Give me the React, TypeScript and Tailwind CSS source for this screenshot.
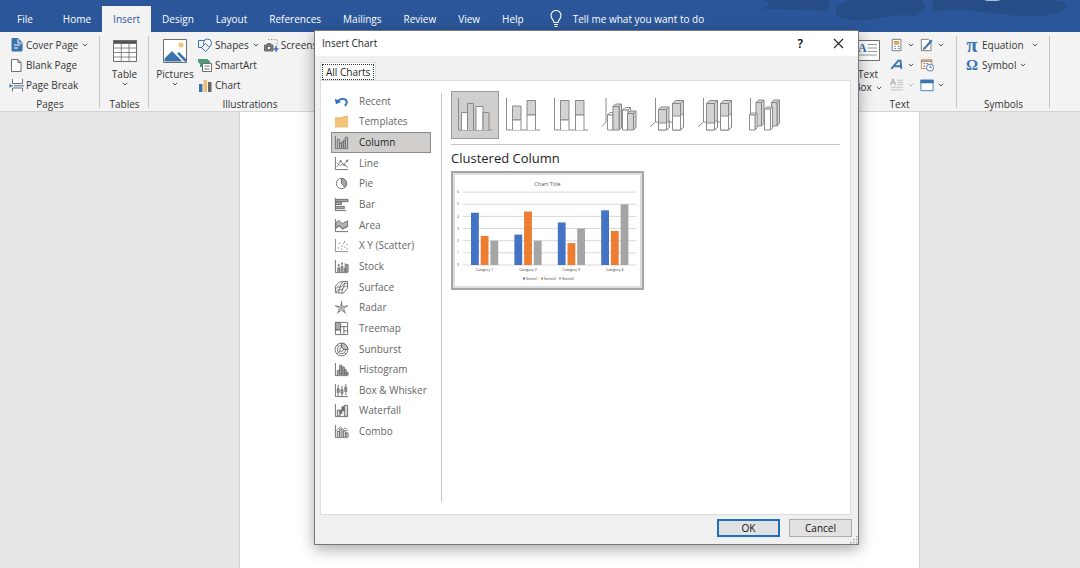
import type { ReactNode } from 'react';

const ribbonTabs = ['File', 'Home', 'Insert', 'Design', 'Layout', 'References', 'Mailings', 'Review', 'View', 'Help'];

const INK = '#6e6e6e';
const BLUE = '#3b73af';

function Icon({ children, className = 'w-4 h-4', box = '0 0 16 16' }: { children: ReactNode; className?: string; box?: string }) {
  return (
    <svg viewBox={box} className={`shrink-0 ${className}`} fill="none" stroke={INK} strokeWidth="1" aria-hidden="true">
      {children}
    </svg>
  );
}

function Chevron({ faded = false }: { faded?: boolean }) {
  return (
    <svg viewBox="0 0 6 6" className="h-[6px] w-[6px] shrink-0" fill="none" stroke={faded ? '#b5b5b5' : '#555'} strokeWidth="1" aria-hidden="true">
      <path d="M0.8 1.8 3 4l2.2-2.2" />
    </svg>
  );
}

const axes = <path d="M1.5 1v13.5H15" />;

const chartTypes: { name: string; art: ReactNode }[] = [
  {
    name: 'Recent',
    art: (
      <g stroke="#2f6db5" strokeWidth="2">
        <path d="M3.5 8.5C6 4.5 12.5 4 13.5 8c.4 2-.6 3.5-2 4.5" />
        <path d="M1 5l1 6 5.5-2.5z" fill="#2f6db5" stroke="none" />
      </g>
    ),
  },
  {
    name: 'Templates',
    art: (
      <g stroke="none">
        <path d="M1 3.5h8l1.500-1.500H15v12H1z" fill="#e9b866" />
        <path d="M1 4.5h9l1-1h4v10.500H1z" fill="#f0c27a" />
      </g>
    ),
  },
  {
    name: 'Column',
    art: (
      <>
        {axes}
        <path d="M3.5 14V4.5H6V14M8 14V7.500h2V14M12 14V2.500h2.500V14" fill="#bdbdbd" />
        <path d="M6 14V9h2v5M10 14V5.500h2V14" />
      </>
    ),
  },
  {
    name: 'Line',
    art: (
      <>
        {axes}
        <path d="M3 12l4-6.500 3.500 4L15 4M3 7l3.500 3.500 3-2L15 12" strokeWidth="0.8" />
        <path d="M6 4.500h2v2H6zM10 8.500h2v2h-2zM13 4h2v2h-2z" fill={INK} stroke="none" />
      </>
    ),
  },
  {
    name: 'Pie',
    art: (
      <>
        <circle cx="8" cy="8" r="5.5" />
        <path d="M8 2.500a5.500 5.500 0 0 1 3.500 9.700L8 8z" fill="#a8a8a8" />
      </>
    ),
  },
  {
    name: 'Bar',
    art: (
      <>
        <path d="M1.500 1v14" />
        <path d="M1.500 2.500H15v2.500H1.500zM1.500 5H8v3H1.500zM1.500 10H11v2.500H1.500z" fill="#a8a8a8" />
        <path d="M1.500 14.500H13" />
      </>
    ),
  },
  {
    name: 'Area',
    art: (
      <>
        <path d="M2 5l3-2.500L9 6l5.500-3v6L9 11 5.500 7.500 2 11z" fill="#b5b5b5" />
        <path d="M1.500 1v13.500H15M2 11l3.500-2.500L9 12l5.500-3" />
      </>
    ),
  },
  {
    name: 'X Y (Scatter)',
    art: (
      <>
        <path d="M1.500 1v13.500H15" strokeWidth="0.8" />
        <path d="M4 10h1.200v1.200H4zM5.500 5h1.200v1.200H5.500zM8 8h1.200v1.200H8zM7.500 11.500h1.200v1H7.500zM10.500 3.500h1.200v1.200h-1.200zM11 9h1.200v1.200H11zM13 6h1.200v1.200H13zM13.500 11h1v1h-1zM9.500 5.500h1v1h-1z" fill={INK} stroke="none" />
      </>
    ),
  },
  {
    name: 'Stock',
    art: (
      <>
        {axes}
        <path d="M4 14V9.500h2V14M7.500 14V8h2v6M11 14V9.500h1.500V14M13 14V6h2v8" fill="#b5b5b5" />
        <path d="M5 5v3.500M8.500 3.500V7M12 4.500v4M4 6.500h2M7.500 5h2" />
      </>
    ),
  },
  {
    name: 'Surface',
    art: (
      <>
        <path d="M1.500 6.500L6 2l8.500-.5v7L10 14l-8.500-.5z" />
        <path d="M1.500 10C4 5 7 9.500 9 6s4-2 5.500-2M2 13c2.500-5 5-1 7.500-4s3.500-2 5-2.500M5 13.500c0-4 2-8 4-11.500M8.500 13.500c0-3 2-7 3.500-11" />
      </>
    ),
  },
  {
    name: 'Radar',
    art: (
      <>
        <path d="M8 1v7.500M1 6l7 2.500L15 6M3.500 14.500l4.500-6 4.500 6" />
        <path d="M8 3.500l1.500 3.500 4-.5-3 3 1 3.500L8 11l-3.500 2 1-3.500-3-3 4 .5z" fill="#c4c4c4" fillOpacity="0.6" strokeWidth="0.7" />
      </>
    ),
  },
  {
    name: 'Treemap',
    art: (
      <>
        <path d="M1.500 1.500h13v13h-13z" />
        <path d="M1.500 1.500H7v8H1.500z" fill="#a8a8a8" />
        <path d="M7 6h7.500M10.500 6v8.500M7 9.500v5M1.500 9.500H7M10.500 10.500h4" />
      </>
    ),
  },
  {
    name: 'Sunburst',
    art: (
      <>
        <circle cx="8" cy="8" r="6.8" />
        <circle cx="8" cy="8" r="4.3" />
        <path d="M8 1.200A6.800 6.800 0 0 1 14.800 8H10L8 6z" fill="#bdbdbd" />
        <circle cx="8" cy="8" r="2" fill="#fff" />
        <path d="M8 1.200V6M10 8h4.800M6.500 9.500L3.200 12.800M3.200 3.200l1.800 1.800M11 11l1.800 1.800" />
      </>
    ),
  },
  {
    name: 'Histogram',
    art: (
      <>
        {axes}
        <path d="M3.500 14V9H6v5M6 14V3.500h2.500V14M8.500 14V5.500H11V14M11 14V8h2v6M13 14v-3h2v3" fill="#a8a8a8" />
      </>
    ),
  },
  {
    name: 'Box & Whisker',
    art: (
      <>
        {axes}
        <path d="M4.500 3v10M8.500 4v9M12.500 2v10M3.500 3h2M7.500 4h2M11.500 2h2M3.500 13h2M7.500 13h2M11.500 12h2" strokeWidth="0.8" />
        <path d="M3.500 6h2v4h-2zM7.500 7h2v4h-2zM11.500 4.500h2V9h-2z" fill="#a8a8a8" />
      </>
    ),
  },
  {
    name: 'Waterfall',
    art: (
      <>
        {axes}
        <path d="M3.500 7.500h3V14h-3zM11 2.500h3.500V14H11z" fill="#d5d5d5" />
        <path d="M6.500 7.500h2V11h-2zM8.500 4H11v4H8.500z" fill={INK} />
      </>
    ),
  },
  {
    name: 'Combo',
    art: (
      <>
        {axes}
        <path d="M3.500 14V8H6v6M6 14V5.500h2.500V14M10 14V7h2.500v7M12.500 14V9.500H15V14" fill="#d5d5d5" />
        <path d="M2 8l4.500-5L10 6l2-2 3 3.500" strokeWidth="0.8" />
      </>
    ),
  },
];

type BlockProps = { x: number; y: number; w: number; bottom?: number; d?: number; fill?: string; split?: number };

// column with a top and a right face; split puts a white part at the foot
function Block({ x, y, w, bottom = 39, d = 2.5, fill = '#d3d3d3', split }: BlockProps) {
  const r = x + w;
  return (
    <>
      <path d={`M${x} ${y}l${d} ${-d}h${w}v${bottom - y}L${r} ${bottom}V${y}z`} fill={fill} />
      <path d={`M${x} ${y}H${r}V${bottom}H${x}z`} fill={fill} />
      {split && <path d={`M${x} ${split}H${r}l${d} ${-d}V${bottom - d}L${r} ${bottom}H${x}zM${r} ${split}V${bottom}`} fill="#fff" />}
      <path d={`M${r} ${y}l${d} ${-d}`} />
    </>
  );
}

const flatAxes = <path d="M7.5 7v32H41" />;
const deepAxes = <path d="M12.5 7v24L7 36M12.5 31H41l-3 4" />;

const subtypes: { name: string; art: ReactNode }[] = [
  {
    name: 'Clustered Column',
    art: (
      <>
        {flatAxes}
        <path d="M10.500 39V21.500h6V39M25 39V15.500h7V39" fill="#fff" />
        <path d="M16.500 39V12.500h6V39M32 39V21.500h6V39" fill="#cbcbcb" />
      </>
    ),
  },
  {
    name: 'Stacked Column',
    art: (
      <>
        {flatAxes}
        <path d="M13.500 29V15h8.500v14zM28 24V9.500h8.500V24z" fill="#d3d3d3" />
        <path d="M13.500 39V29H22v10M28 39V24h8.500v15" fill="#fff" />
      </>
    ),
  },
  {
    name: '100% Stacked Column',
    art: (
      <>
        {flatAxes}
        <path d="M13.500 29V9.500H22V29zM28.500 24V9.500H37V24z" fill="#d3d3d3" />
        <path d="M13.500 39V29H22v10M28.500 39V24H37v15" fill="#fff" />
      </>
    ),
  },
  {
    name: '3-D Clustered Column',
    art: (
      <>
        <path d="M11 7v24L7 35.500" />
        <Block x={12.5} y={24} w={5.5} fill="#fff" />
        <Block x={18} y={15.5} w={6} />
        <Block x={27.5} y={19} w={5.5} fill="#fff" />
        <Block x={32.5} y={22.5} w={6} />
      </>
    ),
  },
  {
    name: '3-D Stacked Column',
    art: (
      <>
        {deepAxes}
        <Block x={15.5} y={18.5} w={8} split={32} />
        <Block x={29.5} y={12.5} w={8} d={3} split={25} />
      </>
    ),
  },
  {
    name: '3-D 100% Stacked Column',
    art: (
      <>
        {deepAxes}
        <Block x={15.5} y={12.5} w={8} d={3} split={32} />
        <Block x={29.5} y={12.5} w={8} d={3} split={25} />
      </>
    ),
  },
  {
    name: '3-D Column',
    art: (
      <>
        <path d="M11.500 7v24" />
        <Block x={17} y={11.5} w={5.5} bottom={35} />
        <Block x={10.5} y={24} w={5.5} d={2} fill="#fff" />
        <Block x={32.5} y={11.5} w={5.5} bottom={35} />
        <Block x={25.5} y={18} w={6} d={2} fill="#fff" />
      </>
    ),
  },
];

const seriesColors = ['#4472c4', '#ed7d31', '#a5a5a5'];
const categories = [
  [4.3, 2.4, 2],
  [2.5, 4.4, 2],
  [3.5, 1.8, 3],
  [4.5, 2.8, 5],
];

function ChartPreview() {
  return (
    <svg viewBox="0 0 185 111" className="block w-full bg-white" fontFamily="'Open Sans', sans-serif" fill="#555">
      <text x="92.5" y="10.5" fontSize="5.5" textAnchor="middle">Chart Title</text>
      {[0, 1, 2, 3, 4, 5, 6].map((n) => (
        <g key={n}>
          <path d={`M8 ${90 - n * 12.15}H181`} stroke="#d4d4d4" strokeWidth="0.9" />
          <text x="2" y={91.2 - n * 12.15} fontSize="3.5">{n}</text>
        </g>
      ))}
      {categories.map((values, c) => (
        <g key={c}>
          {values.map((v, s) => (
            <rect key={s} x={16 + c * 43.4 + s * 9.7} y={90 - v * 12.15} width="7.8" height={v * 12.15} fill={seriesColors[s]} />
          ))}
          <text x={29.5 + c * 43.4} y="96" fontSize="3.5" textAnchor="middle" fill="#333">Category {c + 1}</text>
        </g>
      ))}
      {seriesColors.map((color, s) => (
        <g key={color}>
          <rect x={68 + s * 18} y="102.5" width="2" height="2" fill={color} />
          <text x={71 + s * 18} y="104.7" fontSize="3.5" fill="#333">Series{s + 1}</text>
        </g>
      ))}
    </svg>
  );
}

function Group({ label, className = '', children }: { label: string; className?: string; children: ReactNode }) {
  return (
    <section className={`relative flex shrink-0 flex-col pt-[3px] ${className}`}>
      <div className="flex h-[61px] shrink-0">{children}</div>
      <h2 className="shrink-0 text-center leading-4">{label}</h2>
      <div className="absolute right-0 top-1 h-[72px] w-px bg-[#c4c4c4]" />
    </section>
  );
}

function SmallButton({ icon, label, arrow = false }: { icon: ReactNode; label: string; arrow?: boolean }) {
  return (
    <button className="flex h-5 items-center whitespace-nowrap">
      {icon}
      <span className="ml-0.5">{label}</span>
      {arrow && <span className="ml-1"><Chevron /></span>}
    </button>
  );
}

function IconButton({ label, faded = false, arrow = true, children }: { label: string; faded?: boolean; arrow?: boolean; children: ReactNode }) {
  return (
    <button aria-label={label} className="flex h-5 items-center gap-1">
      <Icon className="h-[14px] w-[14px]">{children}</Icon>
      {arrow && <Chevron faded={faded} />}
    </button>
  );
}

function Ribbon() {
  return (
    <div className="flex h-[80px] border-b border-[#d5d5d5] bg-[#f3f3f3] text-[#333]">
      <Group label="Pages" className="w-[100px]">
        <div className="flex flex-col pl-2">
          <SmallButton
            label="Cover Page"
            arrow
            icon={
              <Icon>
                <path d="M4 1.500h6l4 4V14H4z" fill={BLUE} stroke={BLUE} />
                <path d="M10 2v4h4M6 8h6M6 11h4" stroke="#fff" />
              </Icon>
            }
          />
          <SmallButton
            label="Blank Page"
            icon={<Icon><path d="M3.500 2.500h6.500l3 3v9h-9.500zM10 2.500v3h3" fill="#fff" /></Icon>}
          />
          <SmallButton
            label="Page Break"
            icon={
              <Icon>
                <path d="M4.500 2v4.500h10V2M4.500 14.500V11h10v3.500" fill="#fff" />
                <path d="M6 8.800h10M2 8.800h3" stroke={BLUE} />
                <path d="M1.500 6.500v4.500L4 8.800z" fill={BLUE} stroke="none" />
              </Icon>
            }
          />
        </div>
      </Group>

      <Group label="Tables" className="w-[49px]">
        <button className="flex w-full flex-col items-center pt-1">
          <Icon className="h-6 w-[26px]" box="0 0 26 24">
            <path d="M1.500 1.500h23v21h-23z" fill="#fff" />
            <path d="M1.500 1.500h23v3h-23z" fill="#555" />
            <path d="M1.500 9h23M1.500 13.500h23M1.500 18h23M9.300 5v17.500M17 5v17.500" strokeWidth="0.8" />
          </Icon>
          <span className="mt-1 leading-[14px]">Table</span>
          <Chevron />
        </button>
      </Group>

      <Group label="Illustrations" className="w-[202px]">
        <button className="ml-1 flex w-11 flex-col items-center pt-1">
          <Icon className="h-6 w-[26px]" box="0 0 26 24">
            <path d="M1.500.5h23v23h-23z" fill="#fff" />
            <circle cx="19" cy="6" r="2.5" fill="#efc375" stroke="none" />
            <path d="M2.500 22.500v-3l7.500-7.500 10.500 10.500zM15 14.500l2-1.500 7 7v2.500h-1.500z" fill={BLUE} stroke="none" />
          </Icon>
          <span className="mt-1 leading-[14px]">Pictures</span>
          <Chevron />
        </button>
        <div className="flex flex-col">
          <SmallButton
            label="Shapes"
            arrow
            icon={
              <Icon>
                <g stroke={BLUE}>
                  <path d="M1.500 3.500h7v7h-7z" fill="#fff" />
                  <circle cx="10.5" cy="6" r="4" fill="#fff" />
                  <path d="M8.500 6.500l4 4-4 4-4-4z" fill="#f3f3f3" />
                </g>
              </Icon>
            }
          />
          <SmallButton
            label="SmartArt"
            icon={
              <Icon>
                <path d="M1 2h9.500l3 3-2 2H5v3H3V7L1 5z" fill="#4c9c7c" stroke="none" />
                <path d="M5.500 6.500h9v8h-9z" fill="#fff" />
                <path d="M7.500 9h5M7.500 12h5" />
              </Icon>
            }
          />
          <SmallButton
            label="Chart"
            icon={
              <Icon>
                <g stroke="none">
                  <path d="M2 7h3.500v8H2z" fill={BLUE} />
                  <path d="M6.500 3H10v12H6.500z" fill="#eebb70" />
                  <path d="M11 5h3.500v10H11z" fill="#666" />
                </g>
              </Icon>
            }
          />
        </div>
        <div className="ml-1">
          <SmallButton
            label="Screenshot"
            arrow
            icon={
              <Icon>
                <path d="M5 2.500h9V9" strokeDasharray="1.5 1.5" stroke="#999" />
                <path d="M1.500 8h2L4.500 6.500h3L8.500 8h1.500v6h-8.500z" fill="#777" />
                <circle cx="6" cy="11" r="1.7" fill="#fff" />
                <path d="M13 9v6M10.500 12h5" stroke={BLUE} strokeWidth="1.5" />
              </Icon>
            }
          />
        </div>
      </Group>

      <div className="grow" />

      <Group label="Text" className="w-[115px]">
        <button className="ml-1 flex w-11 flex-col items-center pt-1">
          <Icon className="h-6 w-[26px]" box="0 0 26 24">
            <path d="M1.500 1.500h23v20h-23z" fill="#fff" />
            <text x="3" y="13" fontSize="12" fontFamily="'Liberation Serif', serif" fontWeight="700" fill={BLUE} stroke="none">A</text>
            <path d="M13 5.500h9M13 9h9M13 12.500h9M4 16h18" stroke="#999" />
          </Icon>
          <span className="mt-1 leading-[14px]">Text</span>
          <span className="flex items-center gap-1 leading-[13px]">Box <Chevron /></span>
        </button>
        <div className="flex flex-col">
          <IconButton label="Quick Parts">
            <path d="M2.500 1.500h10v13h-10z" fill="#fff" />
            <path d="M5 4h5v3H5z" fill="#e9b866" stroke="#c28d35" />
            <path d="M5 9.500h2M9 9.500h2M5 12h2M9 12h2" stroke={BLUE} />
          </IconButton>
          <IconButton label="WordArt">
            <path d="M1.500 12.500L9.500 3h2.500l1 9.500M5.500 9.500h7" stroke={BLUE} strokeWidth="2.2" />
          </IconButton>
          <IconButton label="Drop Cap" faded>
            <path d="M.5 8L3.500 1l3 7M1.500 5.500h4" stroke="#999" />
            <path d="M8 2.500h7M8 5h7M8 7.500h7M1 10.500h14M1 13.500h14" stroke="#bbb" />
          </IconButton>
        </div>
        <div className="ml-[6px] flex flex-col">
          <IconButton label="Signature Line">
            <path d="M1.500 1.500h8l3 3v10h-11z" fill="#fff" />
            <path d="M13.500 2.500L6 11" stroke={BLUE} strokeWidth="2.5" />
            <path d="M3.500 13l1-2.500L6.500 12z" fill={BLUE} />
          </IconButton>
          <IconButton label="Date and Time" arrow={false}>
            <path d="M1.500 2h12v10h-12z" fill="#fff" stroke="#c97f4a" />
            <path d="M1.500 3.500h12M4 6.500h2M7.500 6.500h2M4 9.500h2" stroke="#8a7464" strokeWidth="1.5" />
            <circle cx="11.5" cy="11" r="4" fill="#fff" stroke={BLUE} />
            <path d="M11.500 8.500V11h2" stroke={BLUE} />
          </IconButton>
          <IconButton label="Object">
            <path d="M1 2.500h14v12H1z" fill="#fff" stroke={BLUE} />
            <path d="M.5 2h15v4H.5z" fill={BLUE} stroke="none" />
          </IconButton>
        </div>
      </Group>

      <Group label="Symbols" className="mr-[30px] w-[93px]">
        <div className="flex flex-col pl-[9px]">
          <button className="flex h-5 items-center gap-1">
            <span className="w-3 font-['Liberation_Serif',serif] text-[20px] font-bold leading-5 text-[#3b73af]" aria-hidden="true">π</span>
            Equation
            <span className="ml-1"><Chevron /></span>
          </button>
          <button className="flex h-5 items-center gap-1">
            <span className="w-3 font-['Liberation_Serif',serif] text-[15px] font-bold leading-5 text-[#3b73af]" aria-hidden="true">Ω</span>
            Symbol
            <Chevron />
          </button>
        </div>
      </Group>
    </div>
  );
}

function Header() {
  return (
    <header className="relative flex h-8 items-end bg-[#2b579a] text-white">
      {/* title bar ornament */}
      <svg viewBox="0 0 330 32" className="absolute right-0 top-0 h-8 w-[330px]" fill="#264d88" aria-hidden="true">
        <path d="M12 0h66c4 3 2 7-2 10-10 2-30-1-38 0C32 8 20 11 12 8l8-4z" />
        <path d="M86 8c4-4 10-6 14-8h72c6 5 4 10-6 16-14-2-24 0-36 2-18 3-38 4-44-3z" />
        <path d="M184 0h120c8 2 14 3 13 6-6 8-26 12-44 10-30-1-56-10-92-4z" />
        <path d="M234 0h17l-4 1h-10z" fill="#aebfdb" />
      </svg>
      <nav className="relative flex h-[26px] pl-[6px]">
        {ribbonTabs.map((tab) => (
          <button
            key={tab}
            className={`px-[11px] first:mr-2 ${tab === 'Insert' ? 'bg-[#f3f3f3] text-[#2b579a]' : ''}`}
          >
            {tab}
          </button>
        ))}
      </nav>
      <button className="relative ml-[14px] flex h-[26px] items-center gap-[10px]">
        <svg viewBox="0 0 14 18" className="h-[18px] w-[14px]" fill="none" stroke="#fff" strokeWidth="1.1" aria-hidden="true">
          <path d="M5 12.500c0-2.500-3-3.500-3-7a5 5 0 0 1 10 0c0 3.500-3 4.500-3 7zM5 14.500h4M5.500 16.500h3" />
        </svg>
        Tell me what you want to do
      </button>
    </header>
  );
}

function InsertChartDialog() {
  return (
    <div role="dialog" aria-label="Insert Chart" className="flex w-[545px] flex-col border border-[#777] bg-[#f0f0f0] text-[#222] shadow-[0_4px_14px_rgba(0,0,0,0.35)]">
      <div className="flex h-[25px] items-center bg-white pl-[7px] pr-[14px]">
        <h1 className="grow">Insert Chart</h1>
        <button aria-label="Help" className="mr-[30px] text-[12px] font-semibold text-black">?</button>
        <button aria-label="Close">
          <svg viewBox="0 0 11 11" className="h-[11px] w-[11px]" fill="none" stroke="#222" strokeWidth="1.1">
            <path d="M1 1l9 9M10 1l-9 9" />
          </svg>
        </button>
      </div>

      <div className="px-[5px] pt-[6px]">
        <div role="tablist" className="flex">
          <button role="tab" aria-selected="true" className="border border-b-0 border-[#dcdcdc] bg-white px-px pt-px">
            <span className="block border border-dotted border-[#333] px-[3px] leading-[14px]">All Charts</span>
          </button>
        </div>

        <div className="mr-[2px] flex h-[435px] border border-[#dcdcdc] bg-white pl-[10px] pr-[10px]">
          <ul className="mr-[10px] mt-[10px] flex h-[351px] w-[100px] flex-col text-[#666]">
            {chartTypes.map(({ name, art }) => (
              <li key={name} className="flex flex-1">
                <button
                  className={`flex w-full items-center gap-[10px] whitespace-nowrap border pl-[2px] ${
                    name === 'Column' ? 'border-[#8c8c8c] bg-[#d0cfcd] text-[#222]' : 'border-transparent'
                  }`}
                >
                  <Icon className="h-[15px] w-[15px]">{art}</Icon>
                  {name}
                </button>
              </li>
            ))}
          </ul>

          <div className="mb-3 mt-3 w-px bg-[#c6c6c6]" />

          <div className="ml-[9px] min-w-0 grow pt-[10px]">
            <div className="flex border-b border-[#c6c6c6] pb-[5px]">
              {subtypes.map(({ name, art }, i) => (
                <button
                  key={name}
                  aria-label={name}
                  className={`h-12 w-12 ${i === 0 ? 'bg-[#d0cfcd] outline outline-1 -outline-offset-1 outline-[#9a9a9a]' : ''}`}
                >
                  <svg viewBox="0 0 48 48" className="h-12 w-12" fill="none" stroke="#808080" strokeWidth="0.9">
                    {art}
                  </svg>
                </button>
              ))}
            </div>
            <h2 className="text-[13px] font-normal leading-[26px] text-[#222]">Clustered Column</h2>
            <button aria-label="Clustered Column preview" className="block w-[193px] border-2 border-[#a6a6a6] bg-[#dcdcdc] p-[2px]">
              <ChartPreview />
            </button>
          </div>
        </div>
      </div>

      <div className="flex justify-end gap-[9px] px-[6px] pb-[7px] pt-1 text-[#111]">
        <button className="flex h-[18px] w-[63px] items-center justify-center border-2 border-[#1f6fc4] bg-[#e1e1e1]">OK</button>
        <button className="flex h-[18px] w-[63px] items-center justify-center border border-[#adadad] bg-[#e1e1e1]">Cancel</button>
      </div>
      <svg viewBox="0 0 8 8" className="absolute bottom-px right-px h-2 w-2" fill="#aaa" aria-hidden="true">
        <path d="M6 0h1.500v1.500H6zM6 3h1.500v1.500H6zM3 3h1.500v1.500H3zM6 6h1.500v1.500H6zM3 6h1.500v1.500H3zM0 6h1.500v1.500H0z" />
      </svg>
    </div>
  );
}

export default function App() {
  return (
    <div className="relative flex min-h-screen flex-col overflow-hidden bg-[#e6e6e6] font-['Open_Sans',sans-serif] text-[10px] font-medium">
      <Header />
      <Ribbon />
      <main className="flex grow justify-center pl-[79px]">
        <div className="w-[681px] border-x border-[#d0d0d0] bg-white" />
      </main>
      <div className="absolute inset-x-0 top-[30px] flex justify-center pl-[93px]">
        <div className="relative">
          <InsertChartDialog />
        </div>
      </div>
    </div>
  );
}
